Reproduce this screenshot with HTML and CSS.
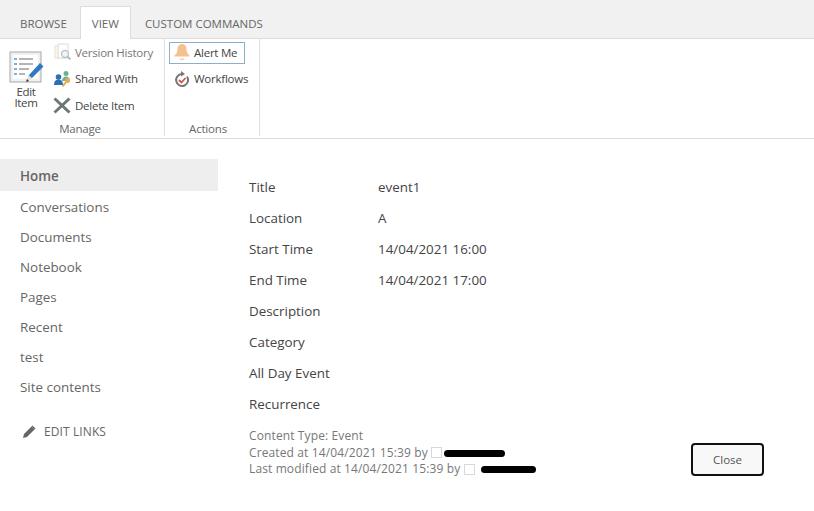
FILE: index.html
```html
<!DOCTYPE html>
<html lang="en">
<head>
<meta charset="utf-8">
<title>event1</title>
<link rel="stylesheet" href="styles.css">
</head>
<body>
<header class="top">
  <nav class="tabs">
    <span class="tab">BROWSE</span>
    <span class="tab tab-active">VIEW</span>
    <span class="tab">CUSTOM COMMANDS</span>
  </nav>
  <div class="ribbon">
    <section class="group group-manage">
      <div class="group-body">
        <div class="big-btn">
          <svg class="icon-edit" width="36" height="36" viewBox="0 0 36 36">
            <rect x="1" y="1" width="31" height="30" fill="#f0f0f0" stroke="#a8a8a8"/>
            <rect x="4" y="4" width="25" height="24" fill="#fff"/>
            <path d="M5 8h3M5 13h3M5 18h3M5 23h3" stroke="#7fb0d6" stroke-width="2"/>
            <path d="M10 8h14M10 13h14M10 18h10M10 23h6" stroke="#b5b5b5" stroke-width="2"/>
            <path d="M18 30l2-6L31 12l3.500 3.500L23 27z" fill="#2f78c4"/>
            <path d="M17 31l2.500-7 4 3.500z" fill="#e8e2d2"/>
            <path d="M17 31l1-3 2 2z" fill="#333"/>
          </svg>
          <span class="big-label">Edit<br>Item</span>
        </div>
        <div class="small-col">
          <div class="small-btn is-disabled">
            <svg width="18" height="18" viewBox="-1 0 18 18">
              <rect x="1" y="3" width="9" height="12" fill="#fbf6ee" stroke="#eadfcf"/>
              <rect x="4" y="1" width="10" height="14" fill="#fff" stroke="#e0dcd6"/>
              <circle cx="11" cy="11" r="3.500" fill="#eef4f8" stroke="#b9c6cf" stroke-width="1.400"/>
              <path d="M13.500 13.500l3 3" stroke="#a7b0b6" stroke-width="1.600"/>
            </svg>
            <span>Version History</span>
          </div>
          <div class="small-btn">
            <svg width="18" height="18" viewBox="-1 0 18 18">
              <circle cx="12" cy="3.500" r="2.500" fill="#6fae97"/>
              <path d="M8 11c0-3 2-4.500 4-4.500s4 1.500 4 4.500z" fill="#6fae97"/>
              <circle cx="4.500" cy="7" r="2.800" fill="#2f6fb5"/>
              <path d="M0 15c0-4 2-5.500 4.500-5.500S9 11 9 15z" fill="#2f6fb5"/>
              <circle cx="13.500" cy="10.500" r="2.500" fill="#eda94f"/>
              <path d="M12 12l-3.500 4.500" stroke="#eda94f" stroke-width="2"/>
            </svg>
            <span>Shared With</span>
          </div>
          <div class="small-btn">
            <svg width="18" height="18" viewBox="0 0 18 18">
              <path d="M1.500 2.500l15 14M16.500 2.500l-15 14" stroke="#6c7878" stroke-width="3"/>
            </svg>
            <span>Delete Item</span>
          </div>
        </div>
      </div>
      <div class="group-label">Manage</div>
    </section>
    <section class="group group-actions">
      <div class="group-body">
        <div class="small-col">
          <div class="small-btn is-selected">
            <svg width="16" height="18" viewBox="0 0 16 18">
              <path d="M8 1c-3 0-4.500 2-4.500 5 0 3-1 5-3 6.500v1h15v-1C13.500 11 12.500 9 12.500 6c0-3-1.500-5-4.500-5z" fill="#f4c28f"/>
              <path d="M5.500 15.500h5c0 1-1 1.800-2.500 1.800s-2.500-.8-2.500-1.800z" fill="#f5d2aa"/>
            </svg>
            <span>Alert Me</span>
          </div>
          <div class="small-btn">
            <svg width="16" height="18" viewBox="0 0 16 18">
              <path d="M13 6.500a6 6 0 1 1-5-2.500" fill="none" stroke="#777" stroke-width="2"/>
              <path d="M7 1l4 3-4 2.500z" fill="#777"/>
              <path d="M5 10l2.500 2.500 4-4.500" fill="none" stroke="#d0564a" stroke-width="1.800"/>
            </svg>
            <span>Workflows</span>
          </div>
        </div>
      </div>
      <div class="group-label">Actions</div>
    </section>
  </div>
</header>

<div class="page">
  <aside class="side">
    <ul class="nav">
      <li class="nav-item nav-current">Home</li>
      <li class="nav-item">Conversations</li>
      <li class="nav-item">Documents</li>
      <li class="nav-item">Notebook</li>
      <li class="nav-item">Pages</li>
      <li class="nav-item">Recent</li>
      <li class="nav-item">test</li>
      <li class="nav-item">Site contents</li>
    </ul>
    <div class="edit-links">
      <svg width="16" height="16" viewBox="0 0 16 16">
        <path d="M2 14l1-4 7.500-7.500 3 3L6 13z" fill="#666"/>
        <path d="M11.500 1.500l3 3-1 1-3-3z" fill="#666"/>
      </svg>
      <span>EDIT LINKS</span>
    </div>
  </aside>
  <main class="content">
    <dl class="fields">
      <dt>Title</dt><dd>event1</dd>
      <dt>Location</dt><dd>A</dd>
      <dt>Start Time</dt><dd>14/04/2021 16:00</dd>
      <dt>End Time</dt><dd>14/04/2021 17:00</dd>
      <dt>Description</dt><dd></dd>
      <dt>Category</dt><dd></dd>
      <dt>All Day Event</dt><dd></dd>
      <dt>Recurrence</dt><dd></dd>
    </dl>
    <div class="foot">
      <div class="meta">
        <div>Content Type: Event</div>
        <div class="meta-line">Created at 14/04/2021 15:39 by <i class="presence"></i><i class="scribble scribble-a"></i></div>
        <div class="meta-line">Last modified at 14/04/2021 15:39 by <i class="presence"></i><i class="scribble scribble-b"></i></div>
      </div>
      <button class="close" type="button">Close</button>
    </div>
  </main>
</div>
</body>
</html>
```

FILE: styles.css
```css
* { box-sizing: border-box; }
html, body { margin: 0; padding: 0; }
body {
  width: 814px;
  height: 511px;
  overflow: hidden;
  background: #fff;
  color: #444;
  font-family: "Open Sans", "Noto Sans", sans-serif;
}
.tabs {
  display: flex;
  height: 39px;
  padding: 6px 0 0 7px;
  background: #f1f1f1;
  border-bottom: 1px solid #dcdcdc;
}
.tab {
  padding: 0 13px;
  line-height: 35px;
  font-size: 11.5px;
  color: #666;
}
.tab-active {
  height: 33px;
  margin-right: 1px;
  padding: 0 11px;
  background: #fff;
  border: 1px solid #dcdcdc;
  border-bottom: 0;
  line-height: 33px;
}
.ribbon {
  display: flex;
  height: 100px;
  border-bottom: 1px solid #dedede;
}
.group {
  display: flex;
  flex-direction: column;
  padding-top: 1px;
  margin-bottom: 2px;
  border-right: 1px solid #e1e1e1;
}
.group-manage { width: 165px; }
.group-actions { width: 95px; }
.group-body { display: flex; flex: none; height: 80px; }
.group-label {
  flex: none;
  text-align: center;
  font-size: 11.5px;
  line-height: 18px;
  color: #666;
  letter-spacing: -0.2px;
}
.group-manage .group-label { padding-right: 4px; }
.group-actions .group-label { padding-right: 8px; }
.big-btn {
  width: 52px;
  padding: 11px 0 0 9px;
  color: #444;
  font-size: 11.5px;
  text-align: center;
  display: flex;
  flex-direction: column;
}
.icon-edit { display: block; }
.big-label { display: block; width: 34px; line-height: 11px; margin-top: -1px; letter-spacing: -0.3px; }
.small-col { display: flex; flex-direction: column; gap: 2.500px; }
.small-btn {
  display: flex;
  flex: none;
  align-items: center;
  gap: 4px;
  height: 24px;
  padding-left: 1px;
  font-size: 11.5px;
  color: #444;
  letter-spacing: -0.25px;
  white-space: nowrap;
}
.small-btn svg { flex: none; }
.is-disabled { color: #777; }
.group-actions .small-btn { padding-left: 9px; }
.group-actions .is-selected {
  width: 76px;
  height: 22px;
  margin: 2px 0 0 4px;
  border: 1px solid #8db0c9;
  padding: 0 0 2px 4px;
}
.page { display: flex; }
.side { width: 218px; padding-top: 20px; }
.nav { list-style: none; margin: 0; padding: 0; }
.nav-item {
  height: 30px;
  padding-left: 20px;
  font-size: 13.4px;
  line-height: 32px;
  color: #666;
}
.nav-current {
  height: 32px;
  line-height: 35px;
  background: #eeeeee;
  font-weight: 600;
}
.edit-links {
  display: flex;
  align-items: center;
  gap: 7px;
  margin: 22px 0 0 21px;
  font-size: 12px;
  color: #666;
  letter-spacing: 0.1px;
}
.content { width: 596px; padding: 33px 0 0 31px; }
.fields {
  display: grid;
  grid-template-columns: 129px 1fr;
  grid-auto-rows: 31px;
  margin: 0;
  font-size: 13.4px;
  line-height: 31px;
  color: #444;
}
.fields dd { margin: 0; }
.foot {
  display: flex;
  justify-content: space-between;
  margin-top: 8px;
}
.meta {
  font-size: 12px;
  line-height: 16.500px;
  color: #777;
  letter-spacing: 0.12px;
}
.meta-line { display: flex; align-items: center; white-space: pre; height: 16.500px; }
.presence {
  width: 11px;
  height: 11px;
  border: 1px solid #d8d8d8;
}
.scribble { height: 7px; background: #000; border-radius: 4px; margin-top: 1px; }
.scribble-a { width: 61px; margin-left: 2px; }
.scribble-b { width: 55px; margin-left: 6px; }
.close {
  width: 73px;
  height: 33px;
  margin: 15px 50px 0 0;
  background: #f8f8f8;
  border: 2px solid #111;
  border-radius: 4px;
  font: 11.5px "Open Sans", "Noto Sans", sans-serif;
  color: #555;
}
```
